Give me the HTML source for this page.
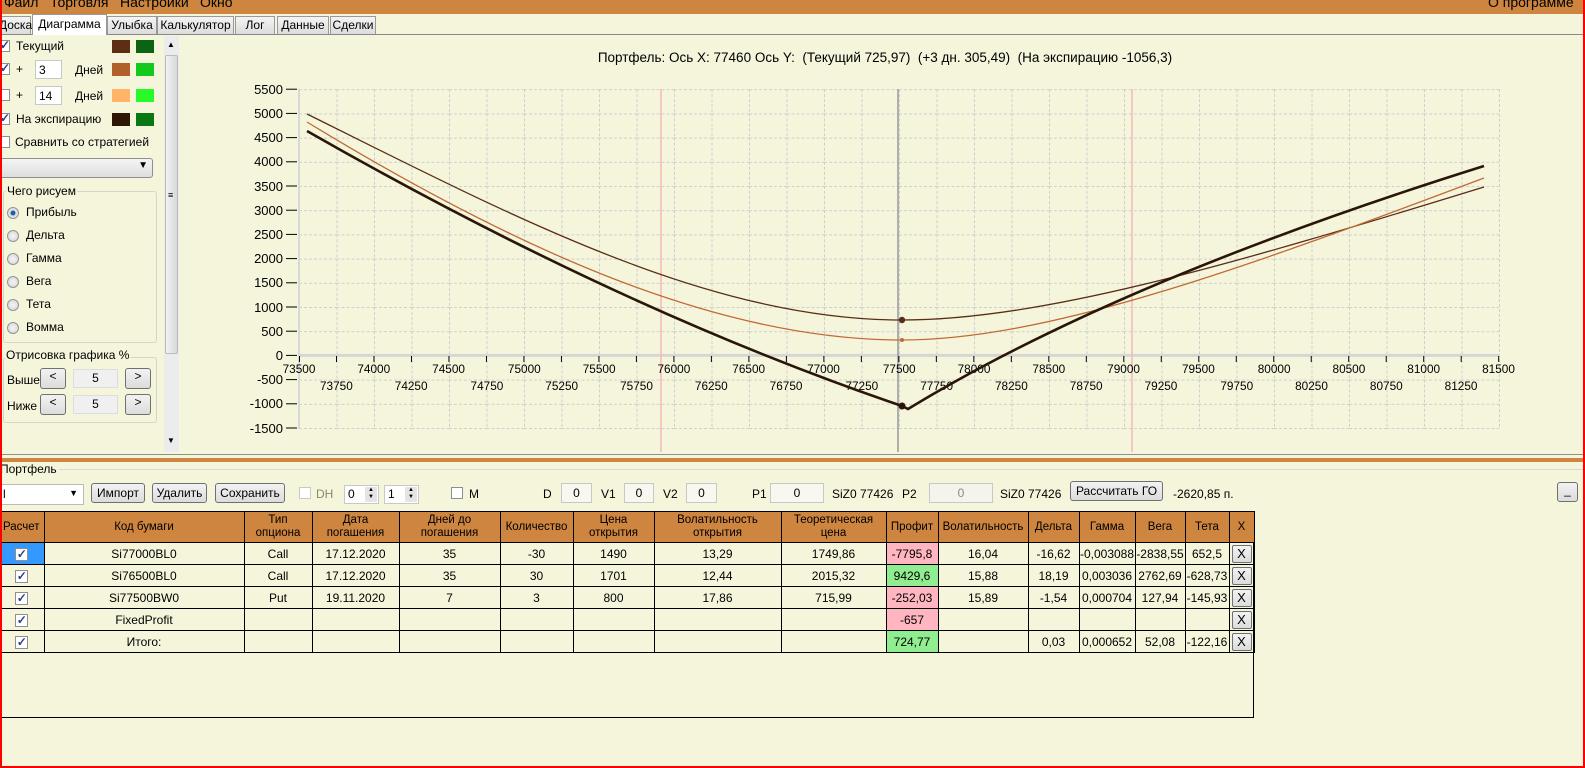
<!DOCTYPE html>
<html><head><meta charset="utf-8">
<style>
*{margin:0;padding:0;box-sizing:border-box}
body{width:1585px;height:768px;overflow:hidden;background:#F5F5DC;font-family:"Liberation Sans",sans-serif;font-size:12px;color:#000;position:relative}
.a{position:absolute}
.menu{left:0;top:0;width:1585px;height:14px;background:#CD853F;overflow:hidden}
.menu span{position:absolute;top:-6px;font-size:14px;white-space:nowrap}
.tab{position:absolute;top:16px;height:18px;border:1px solid #999;border-bottom:none;background:linear-gradient(#f4f4f4,#dcdcdc);font-size:12px;text-align:center;line-height:16px}
.cb{position:absolute;width:12px;height:12px;border:1px solid #8e8f8f;background:#fff}
.ck::after{content:"✓";position:absolute;left:1px;top:-3px;font-size:12px;color:#2a3f8f;font-weight:bold}
.sw{position:absolute;width:18px;height:13px}
.inp{position:absolute;background:#fff;border:1px solid #c8c8c8}
.btn{position:absolute;border:1px solid #707070;border-radius:3px;background:linear-gradient(#f2f2f2,#dcdcdc);text-align:center;font-size:12px;white-space:nowrap}
.rad{position:absolute;width:12px;height:12px;border-radius:50%;border:1px solid #949494;background:radial-gradient(#f4f4f4,#d4d4d4)}
table{border-collapse:collapse;table-layout:fixed}
td{border:1px solid #000;text-align:center;font-size:12px;height:22px;padding:0;overflow:hidden;white-space:nowrap}
th{border:1px solid #000;border-left:1px solid #fff;background:#CD853F;font-weight:normal;font-size:11.5px;height:31px;line-height:13px;padding:0}
.tcb{display:inline-block;width:13px;height:13px;border:1px solid #8e8f8f;background:#fff;position:relative;vertical-align:middle}
.tcb::after{content:"✓";position:absolute;left:1px;top:-2px;font-size:12px;color:#2a3f8f;font-weight:bold}
.pk{background:#FFB6C1}.gr{background:#90EE90}
.xb{display:inline-block;width:20px;height:18px;border:1px solid #707070;border-radius:2px;background:linear-gradient(#f2f2f2,#dcdcdc);line-height:16px;font-size:13px}
</style></head><body>
<div class="a menu"><span style="left:4px">Файл</span><span style="left:50px">Торговля</span><span style="left:120px">Настройки</span><span style="left:200px">Окно</span><span style="left:1488px">О программе</span></div>

<div class="tab" style="left:-2px;width:33px">Доска</div>
<div class="tab" style="left:32px;width:75px;top:14px;height:21px;background:#fff;z-index:2;line-height:18px">Диаграмма</div>
<div class="tab" style="left:107px;width:50px">Улыбка</div>
<div class="tab" style="left:157px;width:77px">Калькулятор</div>
<div class="tab" style="left:235px;width:40px">Лог</div>
<div class="tab" style="left:277px;width:52px">Данные</div>
<div class="tab" style="left:330px;width:46px">Сделки</div>
<div class="a" style="left:0;top:34px;width:1584px;height:421px;border:1px solid #8f8f8f;border-top:1px solid #888"></div>

<!-- left panel -->
<div class="cb ck" style="left:-2px;top:40px"></div><div class="a" style="left:16px;top:39px;font-size:12px">Текущий</div>
<div class="sw" style="left:112px;top:40px;background:#5C2E14"></div><div class="sw" style="left:136px;top:40px;background:#0A6412"></div>
<div class="cb ck" style="left:-2px;top:63px"></div><div class="a" style="left:16px;top:62px">+</div>
<div class="inp" style="left:35px;top:60px;width:27px;height:19px;padding:2px 3px">3</div><div class="a" style="left:75px;top:63px">Дней</div>
<div class="sw" style="left:112px;top:63px;background:#B2602B"></div><div class="sw" style="left:136px;top:63px;background:#14C81E"></div>
<div class="cb" style="left:-2px;top:89px"></div><div class="a" style="left:16px;top:88px">+</div>
<div class="inp" style="left:35px;top:86px;width:27px;height:19px;padding:2px 3px">14</div><div class="a" style="left:75px;top:89px">Дней</div>
<div class="sw" style="left:112px;top:89px;background:#FFB468"></div><div class="sw" style="left:136px;top:89px;background:#28FA28"></div>
<div class="cb ck" style="left:-2px;top:113px"></div><div class="a" style="left:16px;top:112px">На экспирацию</div>
<div class="sw" style="left:112px;top:113px;background:#2E1606"></div><div class="sw" style="left:136px;top:113px;background:#0A7812"></div>
<div class="cb" style="left:-2px;top:136px"></div><div class="a" style="left:15px;top:135px">Сравнить со стратегией</div>
<div class="a" style="left:-3px;top:158px;width:156px;height:20px;border:1px solid #8f8f8f;border-radius:3px;background:linear-gradient(#f4f4f4,#dedede)"><span style="position:absolute;right:4px;top:1px;font-size:10px">▼</span></div>

<div class="a" style="left:3px;top:191px;width:154px;height:152px;border:1px solid #d5d5c8;border-radius:3px"></div>
<div class="a" style="left:6px;top:184px;background:#F5F5DC;padding:0 1px">Чего рисуем</div>
<div class="rad" style="left:7px;top:207px;background:radial-gradient(#1c5fa8 30%,#e0e0e0 40%)"></div><div class="a" style="left:26px;top:205px">Прибыль</div>
<div class="rad" style="left:7px;top:230px"></div><div class="a" style="left:26px;top:228px">Дельта</div>
<div class="rad" style="left:7px;top:253px"></div><div class="a" style="left:26px;top:251px">Гамма</div>
<div class="rad" style="left:7px;top:276px"></div><div class="a" style="left:26px;top:274px">Вега</div>
<div class="rad" style="left:7px;top:299px"></div><div class="a" style="left:26px;top:297px">Тета</div>
<div class="rad" style="left:7px;top:322px"></div><div class="a" style="left:26px;top:320px">Вомма</div>

<div class="a" style="left:3px;top:357px;width:154px;height:66px;border:1px solid #d5d5c8;border-radius:3px"></div>
<div class="a" style="left:5px;top:348px;background:#F5F5DC;padding:0 1px">Отрисовка графика %</div>
<div class="a" style="left:7px;top:373px">Выше</div>
<div class="btn" style="left:40px;top:368px;width:26px;height:21px">&lt;</div>
<div class="a" style="left:73px;top:369px;width:45px;height:19px;background:#f0f0f0;border:1px solid #ddd;text-align:center;line-height:17px">5</div>
<div class="btn" style="left:125px;top:368px;width:26px;height:21px">&gt;</div>
<div class="a" style="left:7px;top:399px">Ниже</div>
<div class="btn" style="left:40px;top:394px;width:26px;height:21px">&lt;</div>
<div class="a" style="left:73px;top:395px;width:45px;height:19px;background:#f0f0f0;border:1px solid #ddd;text-align:center;line-height:17px">5</div>
<div class="btn" style="left:125px;top:394px;width:26px;height:21px">&gt;</div>

<!-- scrollbar -->
<div class="a" style="left:164px;top:36px;width:15px;height:416px;background:#ececec"></div>
<div class="a" style="left:167px;top:40px;font-size:8px">▲</div>
<div class="a" style="left:165px;top:55px;width:13px;height:299px;border:1px solid #bbb;border-radius:2px;background:linear-gradient(90deg,#f2f2f2,#d8d8d8)"></div>
<div class="a" style="left:168px;top:194px;font-size:9px;line-height:3px">≡</div>
<div class="a" style="left:167px;top:436px;font-size:8px">▼</div>

<!-- chart -->
<svg class="a" style="left:0;top:0" width="1585" height="460" xmlns="http://www.w3.org/2000/svg">
<defs><pattern id="g" x="299" y="89.2" width="37.5" height="24.2" patternUnits="userSpaceOnUse">
<line x1="0.5" y1="0" x2="0.5" y2="24.2" stroke="#cfcfcf" stroke-dasharray="3,2"/>
<line x1="0" y1="0.5" x2="37.5" y2="0.5" stroke="#cfcfcf" stroke-dasharray="3,2"/></pattern></defs>
<rect x="299" y="89" width="1200" height="340" fill="url(#g)"/>
<line x1="1499.5" y1="89" x2="1499.5" y2="429" stroke="#cfcfcf" stroke-dasharray="3,2"/>
<line x1="299" y1="89" x2="299" y2="429" stroke="#d8d8d8" stroke-width="2"/>
<line x1="299" y1="355.4" x2="1500" y2="355.4" stroke="#d6d6d6" stroke-width="3"/>
<line x1="661" y1="89" x2="661" y2="452" stroke="#f4b8b8" stroke-width="1.5"/>
<line x1="1132" y1="89" x2="1132" y2="452" stroke="#f4b8b8" stroke-width="1.5"/>
<line x1="898" y1="89" x2="898" y2="452" stroke="#9a9a9a" stroke-width="1.5"/>
<g stroke="#000" stroke-width="1">
<line x1="286" y1="89.2" x2="297" y2="89.2"/><line x1="286" y1="113.4" x2="297" y2="113.4"/><line x1="286" y1="137.6" x2="297" y2="137.6"/><line x1="286" y1="161.8" x2="297" y2="161.8"/><line x1="286" y1="186" x2="297" y2="186"/><line x1="286" y1="210.2" x2="297" y2="210.2"/><line x1="286" y1="234.4" x2="297" y2="234.4"/><line x1="286" y1="258.6" x2="297" y2="258.6"/><line x1="286" y1="282.8" x2="297" y2="282.8"/><line x1="286" y1="307" x2="297" y2="307"/><line x1="286" y1="331.2" x2="297" y2="331.2"/><line x1="286" y1="355.4" x2="297" y2="355.4"/><line x1="286" y1="379.6" x2="297" y2="379.6"/><line x1="286" y1="403.8" x2="297" y2="403.8"/><line x1="286" y1="428" x2="297" y2="428"/>
</g>
<g font-family="Liberation Sans,sans-serif" font-size="13" text-anchor="end" fill="#000">
<text x="283" y="94">5500</text><text x="283" y="118">5000</text><text x="283" y="142">4500</text><text x="283" y="166">4000</text><text x="283" y="191">3500</text><text x="283" y="215">3000</text><text x="283" y="239">2500</text><text x="283" y="263">2000</text><text x="283" y="287">1500</text><text x="283" y="312">1000</text><text x="283" y="336">500</text><text x="283" y="360">0</text><text x="283" y="384">-500</text><text x="283" y="408">-1000</text><text x="283" y="433">-1500</text>
</g>
<g transform="translate(299,0) scale(0.984,1) translate(-299,0)">
<g stroke="#000">
<path d="M299.5 356v6M337.1 356v6M375.2 356v6M413.3 356v6M451.4 356v6M489.5 356v6M527.6 356v6M565.7 356v6M603.8 356v6M641.9 356v6M680 356v6M718.1 356v6M756.2 356v6M794.3 356v6M832.4 356v6M870.5 356v6M908.6 356v6M946.7 356v6M984.8 356v6M1022.9 356v6M1061 356v6M1099.1 356v6M1137.2 356v6M1175.3 356v6M1213.4 356v6M1251.5 356v6M1289.6 356v6M1327.7 356v6M1365.8 356v6M1403.9 356v6M1442 356v6M1480.1 356v6M1518.2 356v6"/>
</g>
<g font-family="Liberation Sans,sans-serif" font-size="12" text-anchor="middle" fill="#000">
<text x="299" y="373">73500</text><text x="375" y="373">74000</text><text x="451" y="373">74500</text><text x="528" y="373">75000</text><text x="604" y="373">75500</text><text x="680" y="373">76000</text><text x="756" y="373">76500</text><text x="832" y="373">77000</text><text x="909" y="373">77500</text><text x="985" y="373">78000</text><text x="1061" y="373">78500</text><text x="1137" y="373">79000</text><text x="1213" y="373">79500</text><text x="1290" y="373">80000</text><text x="1366" y="373">80500</text><text x="1442" y="373">81000</text><text x="1518" y="373">81500</text>
<text x="337" y="390">73750</text><text x="413" y="390">74250</text><text x="490" y="390">74750</text><text x="566" y="390">75250</text><text x="642" y="390">75750</text><text x="718" y="390">76250</text><text x="794" y="390">76750</text><text x="871" y="390">77250</text><text x="947" y="390">77750</text><text x="1023" y="390">78250</text><text x="1099" y="390">78750</text><text x="1175" y="390">79250</text><text x="1252" y="390">79750</text><text x="1328" y="390">80250</text><text x="1404" y="390">80750</text><text x="1480" y="390">81250</text>
</g>
</g>
<text x="885" y="62" font-family="Liberation Sans,sans-serif" font-size="13.5" text-anchor="middle" xml:space="preserve">Портфель: Ось X: 77460 Ось Y:  (Текущий 725,97)  (+3 дн. 305,49)  (На экспирацию -1056,3)</text>
<path d="M307,114 C 505,212 705,320 902,320 C 1045,320 1240,262 1484,187" fill="none" stroke="#5A2D16" stroke-width="1.3"/>
<path d="M307,122 C 520,252 720,340 902,340 C 1045,340 1240,270 1484,178" fill="none" stroke="#C06A35" stroke-width="1.3"/>
<path d="M307,131 Q 620,310 902,406 L908,409 Q 1120,280 1484,166" fill="none" stroke="#2A1608" stroke-width="2.6"/>
<circle cx="902" cy="320" r="3.2" fill="#5A2D16"/>
<circle cx="902" cy="340" r="2" fill="#C06A35"/>
<circle cx="902" cy="406" r="3.5" fill="#2A1608"/>
</svg>

<!-- splitter -->
<div class="a" style="left:0;top:458px;width:1585px;height:4px;background:#CD853F"></div>
<div class="a" style="left:0;top:469px;width:1583px;height:1px;background:#d8d8d8"></div>
<div class="a" style="left:-2px;top:462px;background:#F5F5DC;padding:0 2px;font-size:12px">Портфель</div>

<!-- toolbar -->
<div class="a" style="left:-2px;top:484px;width:86px;height:21px;background:#fff;border:1px solid #bbb;padding:2px 4px">l<span style="position:absolute;right:5px;top:3px;font-size:9px">▼</span></div>
<div class="btn" style="left:91px;top:483px;width:54px;height:20px;line-height:18px">Импорт</div>
<div class="btn" style="left:152px;top:483px;width:55px;height:20px;line-height:18px">Удалить</div>
<div class="btn" style="left:215px;top:483px;width:70px;height:20px;line-height:18px">Сохранить</div>
<div class="cb" style="left:299px;top:487px;border-color:#c8c8c8"></div><div class="a" style="left:316px;top:487px;color:#8a8a6a">DH</div>
<div class="inp" style="left:344px;top:485px;width:35px;height:19px;padding:1px 3px">0<span style="position:absolute;right:1px;top:1px;width:12px;height:15px;background:#e4e4e4;font-size:6px;line-height:7px;text-align:center">▲<br>▼</span></div>
<div class="inp" style="left:384px;top:485px;width:35px;height:19px;padding:1px 3px">1<span style="position:absolute;right:1px;top:1px;width:12px;height:15px;background:#e4e4e4;font-size:6px;line-height:7px;text-align:center">▲<br>▼</span></div>
<div class="cb" style="left:451px;top:487px"></div><div class="a" style="left:469px;top:487px">M</div>
<div class="a" style="left:543px;top:487px">D</div><div class="inp" style="left:561px;top:483px;width:31px;height:20px;text-align:center;line-height:18px;background:#f8f8f0">0</div>
<div class="a" style="left:601px;top:487px">V1</div><div class="inp" style="left:624px;top:483px;width:30px;height:20px;text-align:center;line-height:18px;background:#f8f8f0">0</div>
<div class="a" style="left:663px;top:487px">V2</div><div class="inp" style="left:686px;top:483px;width:31px;height:20px;text-align:center;line-height:18px;background:#f8f8f0">0</div>
<div class="a" style="left:752px;top:487px">P1</div><div class="inp" style="left:770px;top:483px;width:54px;height:20px;text-align:center;line-height:18px;background:#f8f8f0">0</div>
<div class="a" style="left:832px;top:487px">SiZ0 77426</div>
<div class="a" style="left:902px;top:487px">P2</div><div class="inp" style="left:929px;top:483px;width:64px;height:20px;text-align:center;line-height:18px;background:#f4f4ec;color:#888">0</div>
<div class="a" style="left:1000px;top:487px">SiZ0 77426</div>
<div class="btn" style="left:1070px;top:481px;width:93px;height:20px;line-height:18px">Рассчитать ГО</div>
<div class="a" style="left:1173px;top:487px">-2620,85 п.</div>
<div class="btn" style="left:1557px;top:482px;width:21px;height:20px;line-height:14px">_</div>

<!-- table -->
<div class="a" style="left:-1px;top:511px;width:1255px;height:207px;border:1px solid #000;border-left:none"></div>
<table class="a" style="left:-1px;top:511px;width:1255px">
<colgroup><col style="width:45px"><col style="width:200px"><col style="width:68px"><col style="width:87px"><col style="width:101px"><col style="width:73px"><col style="width:81px"><col style="width:127px"><col style="width:105px"><col style="width:52px"><col style="width:90px"><col style="width:51px"><col style="width:56px"><col style="width:50px"><col style="width:44px"><col style="width:25px"></colgroup>
<tr><th style="border-left:none">Расчет</th><th>Код бумаги</th><th>Тип<br>опциона</th><th>Дата<br>погашения</th><th>Дней до<br>погашения</th><th>Количество</th><th>Цена<br>открытия</th><th>Волатильность<br>открытия</th><th>Теоретическая<br>цена</th><th>Профит</th><th>Волатильность</th><th>Дельта</th><th>Гамма</th><th>Вега</th><th>Тета</th><th>X</th></tr>
<tr><td style="background:#3399FF;border-left:none"><span class="tcb"></span></td><td>Si77000BL0</td><td>Call</td><td>17.12.2020</td><td>35</td><td>-30</td><td>1490</td><td>13,29</td><td>1749,86</td><td class="pk">-7795,8</td><td>16,04</td><td>-16,62</td><td>-0,003088</td><td>-2838,55</td><td>652,5</td><td><span class="xb">X</span></td></tr>
<tr><td style="border-left:none"><span class="tcb"></span></td><td>Si76500BL0</td><td>Call</td><td>17.12.2020</td><td>35</td><td>30</td><td>1701</td><td>12,44</td><td>2015,32</td><td class="gr">9429,6</td><td>15,88</td><td>18,19</td><td>0,003036</td><td>2762,69</td><td>-628,73</td><td><span class="xb">X</span></td></tr>
<tr><td style="border-left:none"><span class="tcb"></span></td><td>Si77500BW0</td><td>Put</td><td>19.11.2020</td><td>7</td><td>3</td><td>800</td><td>17,86</td><td>715,99</td><td class="pk">-252,03</td><td>15,89</td><td>-1,54</td><td>0,000704</td><td>127,94</td><td>-145,93</td><td><span class="xb">X</span></td></tr>
<tr><td style="border-left:none"><span class="tcb"></span></td><td>FixedProfit</td><td></td><td></td><td></td><td></td><td></td><td></td><td></td><td class="pk">-657</td><td></td><td></td><td></td><td></td><td></td><td><span class="xb">X</span></td></tr>
<tr><td style="border-left:none"><span class="tcb"></span></td><td>Итого:</td><td></td><td></td><td></td><td></td><td></td><td></td><td></td><td class="gr">724,77</td><td></td><td>0,03</td><td>0,000652</td><td>52,08</td><td>-122,16</td><td><span class="xb">X</span></td></tr>
</table>

<!-- red frame -->
<div class="a" style="left:0;top:0;width:2px;height:768px;background:#f00"></div>
<div class="a" style="left:1583px;top:0;width:2px;height:768px;background:#f00"></div>
<div class="a" style="left:0;top:766px;width:1585px;height:2px;background:#f00"></div>
</body></html>
